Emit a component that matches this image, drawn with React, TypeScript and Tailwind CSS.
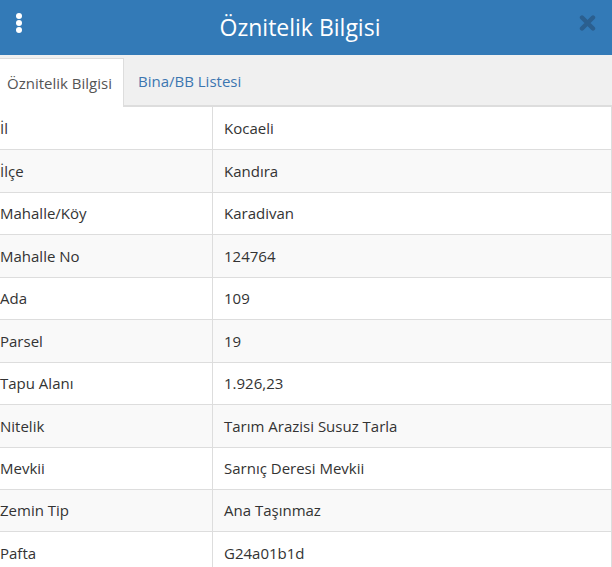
import React from "react"

const rows = [
  ["İl", "Kocaeli"],
  ["İlçe", "Kandıra"],
  ["Mahalle/Köy", "Karadivan"],
  ["Mahalle No", "124764"],
  ["Ada", "109"],
  ["Parsel", "19"],
  ["Tapu Alanı", "1.926,23"],
  ["Nitelik", "Tarım Arazisi Susuz Tarla"],
  ["Mevkii", "Sarnıç Deresi Mevkii"],
  ["Zemin Tip", "Ana Taşınmaz"],
  ["Pafta", "G24a01b1d"],
]

export default function App() {
  return (
    <div
      className="h-[567px] w-[612px] overflow-hidden bg-white text-[15px] text-[#333]"
      style={{ fontFamily: '"Open Sans", "Noto Sans", sans-serif' }}
    >
      {/* Header */}
      <div className="relative flex h-[55px] items-center justify-center bg-[#337ab7]">
        <div className="absolute left-[16px] top-[13px] flex flex-col gap-[1px]">
          <span className="h-[6px] w-[6px] rounded-full bg-white" />
          <span className="h-[6px] w-[6px] rounded-full bg-white" />
          <span className="h-[6px] w-[6px] rounded-full bg-white" />
        </div>
        <h1 className="mr-[12px] text-[23px] leading-none text-white">
          Öznitelik Bilgisi
        </h1>
        <svg
          className="absolute left-[579px] top-[15px]"
          width="17"
          height="16"
          viewBox="0 0 17 16"
        >
          <path
            d="M3 2.5 L14 13.5 M14 2.5 L3 13.5"
            stroke="#2b5f8f"
            strokeWidth="4.4"
            strokeLinecap="round"
          />
        </svg>
      </div>

      {/* Tabs */}
      <div className="flex h-[52px] items-end border-b-2 border-[#ddd] bg-[#f0f0f0]">
        <div className="-mb-[2px] flex h-[49px] w-[124px] items-center border-r border-t border-[#ddd] bg-white pl-[7px] text-[#555]">
          Öznitelik Bilgisi
        </div>
        <div className="flex h-[47px] items-center pl-[14px] text-[#3c76b0]">
          Bina/BB Listesi
        </div>
      </div>

      {/* Table */}
      <div className="border-r border-[#ddd]">
        {rows.map(([k, v], i) => (
          <div
            key={i}
            className={`grid h-[42.44px] grid-cols-[213px_1fr] ${
              i > 0 ? "border-t border-[#ddd]" : ""
            } ${i % 2 === 1 ? "bg-[#f9f9f9]" : "bg-white"}`}
          >
            <div className="flex items-center border-r border-[#ddd]">
              {k}
            </div>
            <div className="flex items-center pl-[11px]">{v}</div>
          </div>
        ))}
      </div>
    </div>
  )
}
